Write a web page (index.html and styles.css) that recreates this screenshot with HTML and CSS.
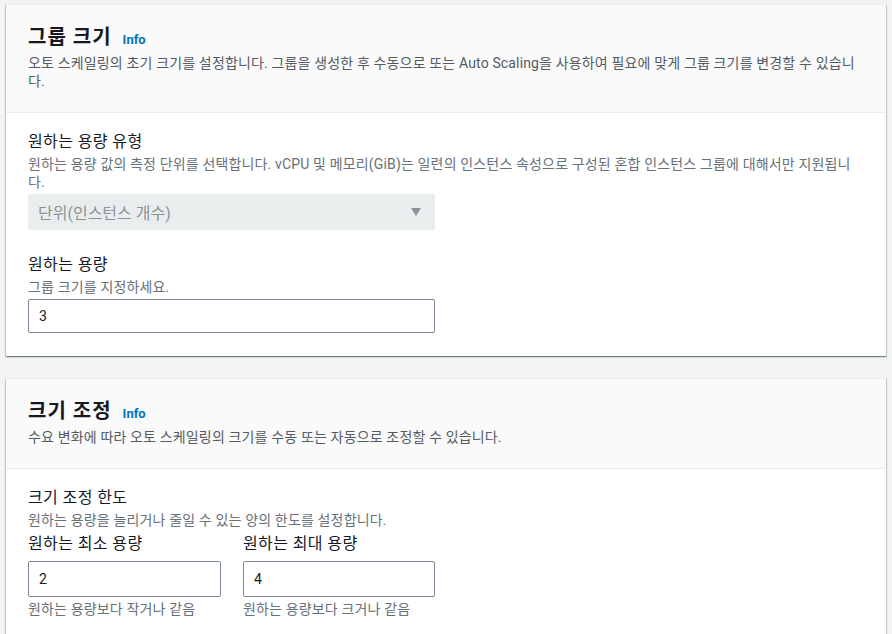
FILE: index.html
```html
<!DOCTYPE html>
<html lang="ko">
<head>
<meta charset="utf-8">
<link rel="stylesheet" href="styles.css">
</head>
<body>
<div class="page">
  <section class="card">
    <header class="card-header">
      <h2 class="title"><span class="title-text">그룹 크기</span><a class="info">Info</a></h2>
      <p class="header-desc">오토 스케일링의 초기 크기를 설정합니다. 그룹을 생성한 후 수동으로 또는 Auto Scaling을 사용하여 필요에 맞게 그룹 크기를 변경할 수 있습니다.</p>
    </header>
    <div class="card-body">
      <div class="field">
        <div class="label">원하는 용량 유형</div>
        <div class="desc">원하는 용량 값의 측정 단위를 선택합니다. vCPU 및 메모리(GiB)는 일련의 인스턴스 속성으로 구성된 혼합 인스턴스 그룹에 대해서만 지원됩니다.</div>
        <div class="select">
          <span>단위(인스턴스 개수)</span>
          <svg class="caret" width="10" height="8" viewBox="0 0 10 8"><path d="M0 0 H10 L5 8 Z" fill="#879596"/></svg>
        </div>
      </div>
      <div class="field field-next">
        <div class="label">원하는 용량</div>
        <div class="desc">그룹 크기를 지정하세요.</div>
        <div class="input input-main">3</div>
      </div>
    </div>
  </section>

  <section class="card">
    <header class="card-header">
      <h2 class="title"><span class="title-text">크기 조정</span><a class="info">Info</a></h2>
      <p class="header-desc">수요 변화에 따라 오토 스케일링의 크기를 수동 또는 자동으로 조정할 수 있습니다.</p>
    </header>
    <div class="card-body">
      <div class="field">
        <div class="label">크기 조정 한도</div>
        <div class="desc">원하는 용량을 늘리거나 줄일 수 있는 양의 한도를 설정합니다.</div>
        <div class="cols">
          <div class="col">
            <div class="col-label">원하는 최소 용량</div>
            <div class="input input-col">2</div>
            <div class="hint">원하는 용량보다 작거나 같음</div>
          </div>
          <div class="col">
            <div class="col-label">원하는 최대 용량</div>
            <div class="input input-col">4</div>
            <div class="hint">원하는 용량보다 크거나 같음</div>
          </div>
        </div>
      </div>
    </div>
  </section>
</div>
</body>
</html>
```

FILE: styles.css
```css
html, body {
  margin: 0;
  padding: 0;
  background: #f2f3f3;
  font-family: Roboto, "Noto Sans CJK KR", sans-serif;
  color: #16191f;
}
.page {
  padding: 4px 6px 0 6px;
}
.card {
  background: #fff;
  border-top: 1px solid #eaeded;
  box-shadow: 0 1px 1px 0 rgba(0, 28, 36, 0.35), 1px 1px 1px 0 rgba(0, 28, 36, 0.15), -1px 1px 1px 0 rgba(0, 28, 36, 0.15);
  margin-bottom: 22px;
}
.card-header {
  background: #fafafa;
  border-bottom: 1px solid #eaeded;
  padding: 19px 22px 22px 22px;
}
.title {
  margin: 0;
  font-size: 20px;
  line-height: 26px;
  font-weight: 700;
  color: #16191f;
  display: flex;
  align-items: baseline;
}
.title-text {
  letter-spacing: 1px;
}
.info {
  font-size: 13px;
  font-weight: 700;
  color: #0073bb;
  margin-left: 11px;
}
.header-desc {
  margin: 1px 0 0 0;
  font-size: 14px;
  line-height: 18px;
  letter-spacing: 0.15px;
  color: #545b64;
}
.card-body {
  padding: 19px 22px 23px 22px;
}
.field-next {
  margin-top: 25px;
}
.label {
  font-size: 16px;
  line-height: 20px;
  letter-spacing: 0.4px;
  color: #16191f;
}
.desc {
  margin-top: 3px;
  font-size: 14px;
  line-height: 18px;
  letter-spacing: 0.15px;
  color: #687078;
}
.select {
  margin-top: 3px;
  width: 407px;
  height: 36px;
  box-sizing: border-box;
  background: #eaeded;
  border-radius: 2px;
  display: flex;
  align-items: center;
  justify-content: space-between;
  padding: 0 14px 0 10px;
  font-size: 16px;
  color: #879596;
}
.caret {
  display: block;
}
.input {
  box-sizing: border-box;
  border: 1px solid #7d8998;
  border-radius: 2px;
  background: #fff;
  display: flex;
  align-items: center;
  padding: 0 10px;
  font-size: 14px;
  color: #16191f;
}
.input-main {
  margin-top: 3px;
  height: 34px;
  width: 407px;
}
.cols {
  display: flex;
  gap: 22px;
  margin-top: 4px;
  width: 407px;
}
.col {
  width: 193px;
}
.col:last-child {
  width: 192px;
}
.col-label {
  font-size: 16px;
  line-height: 22px;
  letter-spacing: 0.4px;
  color: #16191f;
}
.input-col {
  margin-top: 6px;
  height: 36px;
}
.hint {
  margin-top: 3px;
  font-size: 14px;
  line-height: 18px;
  letter-spacing: 0.15px;
  color: #687078;
}
```
